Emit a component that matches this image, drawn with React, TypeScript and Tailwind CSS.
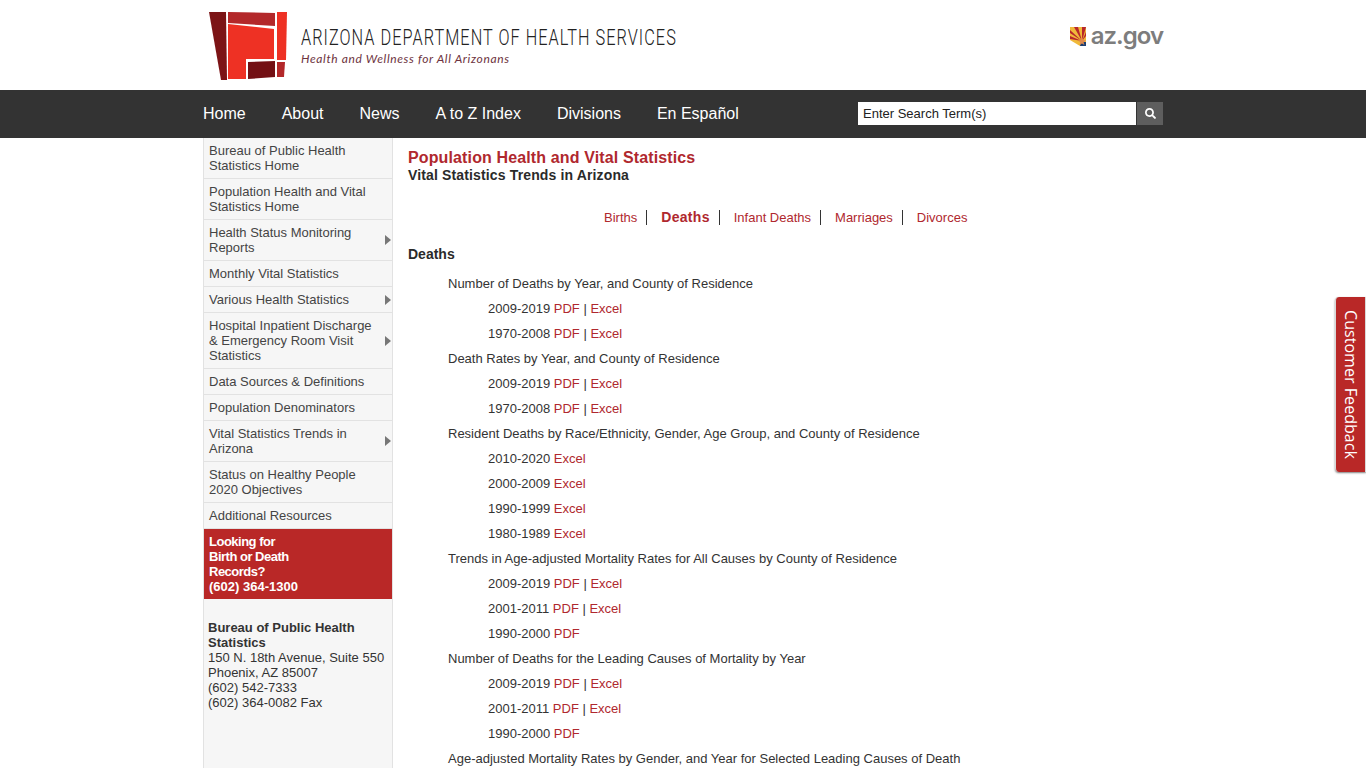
import { FaSearch } from "react-icons/fa";

const navItems = ["Home", "About", "News", "A to Z Index", "Divisions", "En Español"];

const sideItems = [
  { label: "Bureau of Public Health Statistics Home" },
  { label: "Population Health and Vital Statistics Home" },
  { label: "Health Status Monitoring Reports", arrow: true },
  { label: "Monthly Vital Statistics" },
  { label: "Various Health Statistics", arrow: true },
  { label: "Hospital Inpatient Discharge & Emergency Room Visit Statistics", arrow: true },
  { label: "Data Sources & Definitions" },
  { label: "Population Denominators" },
  { label: "Vital Statistics Trends in Arizona", arrow: true },
  { label: "Status on Healthy People 2020 Objectives" },
  { label: "Additional Resources" },
];

const tabs = ["Births", "Deaths", "Infant Deaths", "Marriages", "Divorces"];

type Row = { title: string; years: { range: string; pdf?: boolean; excel?: boolean }[] };

const rows: Row[] = [
  {
    title: "Number of Deaths by Year, and County of Residence",
    years: [
      { range: "2009-2019", pdf: true, excel: true },
      { range: "1970-2008", pdf: true, excel: true },
    ],
  },
  {
    title: "Death Rates by Year, and County of Residence",
    years: [
      { range: "2009-2019", pdf: true, excel: true },
      { range: "1970-2008", pdf: true, excel: true },
    ],
  },
  {
    title: "Resident Deaths by Race/Ethnicity, Gender, Age Group, and County of Residence",
    years: [
      { range: "2010-2020", excel: true },
      { range: "2000-2009", excel: true },
      { range: "1990-1999", excel: true },
      { range: "1980-1989", excel: true },
    ],
  },
  {
    title: "Trends in Age-adjusted Mortality Rates for All Causes by County of Residence",
    years: [
      { range: "2009-2019", pdf: true, excel: true },
      { range: "2001-2011", pdf: true, excel: true },
      { range: "1990-2000", pdf: true },
    ],
  },
  {
    title: "Number of Deaths for the Leading Causes of Mortality by Year",
    years: [
      { range: "2009-2019", pdf: true, excel: true },
      { range: "2001-2011", pdf: true, excel: true },
      { range: "1990-2000", pdf: true },
    ],
  },
  {
    title: "Age-adjusted Mortality Rates by Gender, and Year for Selected Leading Causes of Death",
    years: [],
  },
];

const Logo = () => (
  <svg width="80" height="72" viewBox="0 0 80 72" className="shrink-0">
    <polygon points="1,2 18,2 19,70 13,70" fill="#7c1416" />
    <polygon points="20,2 67,3 67,16 20,13" fill="#b3282a" />
    <polygon points="20,14 66,19 66,49 38,49 38,69 20,69" fill="#ee3124" />
    <polygon points="40,52 67,51 67,67 40,69" fill="#731014" />
    <polygon points="69,2 79,2 78,50 69,50" fill="#ee3124" />
    <polygon points="69,52 77,52 76,67 69,67" fill="#b3282a" />
  </svg>
);

const AzFlag = () => (
  <svg width="18" height="22" viewBox="0 0 18 22" className="shrink-0">
    <polygon points="1,1 17,1 17,20 11,20 1,14" fill="#f0b93a" />
    <polygon points="1,4 1,7 13,15" fill="#b8262c" />
    <polygon points="1,10 1,13 13,15" fill="#b8262c" />
    <polygon points="5,1 9,1 13,15" fill="#b8262c" />
    <polygon points="13,1 17,1 13,15" fill="#b8262c" />
    <polygon points="17,6 17,10 13,15" fill="#b8262c" />
    <polygon points="12,16 17,16 17,20 11,20" fill="#1d3f72" />
    <polygon points="13,11 14.2,14 17,14.5 14.6,16.3 15.4,19 13,17.5 10.6,19 11.4,16.3 9,14.5 11.8,14" fill="#e08a4e" />
  </svg>
);

const App = () => {
  return (
    <div className="relative h-screen overflow-hidden bg-white font-['Liberation_Sans',Arial,sans-serif] text-[13px] leading-[15px] text-[#333333]">
      <header className="h-[90px]">
        <div className="mx-auto flex h-full w-[960px] items-start justify-between">
          <div className="flex items-start pl-[5px] pt-[10px]">
            <Logo />
            <div className="ml-[13px] pt-[15px]">
              <div className="origin-left scale-x-[0.74] font-['Roboto',sans-serif] text-[22px] leading-[26px] font-light tracking-[1.4px] whitespace-nowrap text-[#222222]">
                ARIZONA DEPARTMENT OF HEALTH SERVICES
              </div>
              <div className="font-['Lato',sans-serif] text-[12px] leading-[16px] tracking-[0.63px] text-[#6d3340] italic">
                Health and Wellness for All Arizonans
              </div>
            </div>
          </div>
          <div className="flex items-center gap-[4px] pt-[26px]">
            <AzFlag />
            <span className="-mt-[3px] font-['Inter',sans-serif] text-[24px] leading-[24px] font-semibold tracking-[-1px] text-[#7d7d7d]">
              az.gov
            </span>
          </div>
        </div>
      </header>

      <nav className="h-[48px] bg-[#333333]">
        <div className="mx-auto flex h-full w-[960px] items-center justify-between pb-[2px]">
          <ul className="flex gap-[36px] text-[16px] text-white">
            {navItems.map((item) => (
              <li key={item}>{item}</li>
            ))}
          </ul>
          <div className="flex h-[23px] gap-px">
            <div className="flex w-[278px] items-center bg-white pl-[5px] text-[#222222]">Enter Search Term(s)</div>
            <div className="flex w-[26px] items-center justify-center bg-[#5e5e5e] pl-px">
              <FaSearch size={11} className="text-white" />
            </div>
          </div>
        </div>
      </nav>

      <div className="mx-auto flex w-[960px]">
        <aside className="h-[630px] w-[190px] shrink-0 border-x border-[#e2e2e2] bg-[#f6f6f6]">
          <ul>
            {sideItems.map((item) => (
              <li key={item.label} className="relative border-b border-[#e2e2e2] px-[5px] py-[5px] pr-[20px] text-[#444444]">
                {item.label}
                {item.arrow && (
                  <span className="absolute top-1/2 right-[1px] -mt-[5px] h-0 w-0 border-y-[5px] border-l-[6px] border-y-transparent border-l-[#777777]" />
                )}
              </li>
            ))}
          </ul>
          <div className="bg-[#b92827] p-[5px] font-bold text-white">
            <span className="tracking-[-0.5px]">
              Looking for
              <br />
              Birth or Death
              <br />
              Records?
            </span>
            <br />
            (602) 364-1300
          </div>
          <div className="-ml-px pt-[21px] pl-[5px] text-[#333333]">
            <div className="font-bold">
              Bureau of Public Health
              <br />
              Statistics
            </div>
            150 N. 18th Avenue, Suite 550
            <br />
            Phoenix, AZ 85007
            <br />
            (602) 542-7333
            <br />
            (602) 364-0082 Fax
          </div>
        </aside>

        <main className="flex-1 pl-[15px]">
          <h1 className="pt-[12px] text-[16px] leading-[16px] font-bold tracking-[0.13px] text-[#b0282e]">
            Population Health and Vital Statistics
          </h1>
          <h2 className="pt-px text-[14px] leading-[16px] font-bold tracking-[0.14px] text-[#2a2a2a]">
            Vital Statistics Trends in Arizona
          </h2>
          <div className="flex pt-[27px] pl-[196px] text-[#b0282e]">
            {tabs.map((tab, i) => (
              <span
                key={tab}
                className={`pr-[9px] ${i > 0 ? "pl-[14px]" : ""} ${i < tabs.length - 1 ? "border-r border-[#333333]" : ""} ${
                  tab === "Deaths" ? "text-[14px] font-bold tracking-[0.3px]" : ""
                }`}
              >
                {tab}
              </span>
            ))}
          </div>
          <h3 className="pt-[22px] text-[14px] font-bold text-[#2a2a2a]">Deaths</h3>
          <div className="pt-[9px] leading-[25px]">
            {rows.map((row) => (
              <div key={row.title}>
                <div className="pl-[40px]">{row.title}</div>
                {row.years.map((y) => (
                  <div key={y.range} className="pl-[80px]">
                    {y.range} {y.pdf && <span className="text-[#b0282e]">PDF</span>}
                    {y.pdf && y.excel && " | "}
                    {y.excel && <span className="text-[#b0282e]">Excel</span>}
                  </div>
                ))}
              </div>
            ))}
          </div>
        </main>
      </div>

      <div className="absolute top-[297px] right-0 flex h-[175px] w-[31px] items-center justify-center rounded-l-[4px] border-y border-l border-[#d8d8d8] bg-[#b92827] pr-px font-['Open_Sans',sans-serif] text-[16px] tracking-[0.05px] text-white shadow-[0_1px_2px_rgba(0,0,0,0.5)] [writing-mode:vertical-rl]">
        Customer Feedback
      </div>
    </div>
  );
};

export default App;
